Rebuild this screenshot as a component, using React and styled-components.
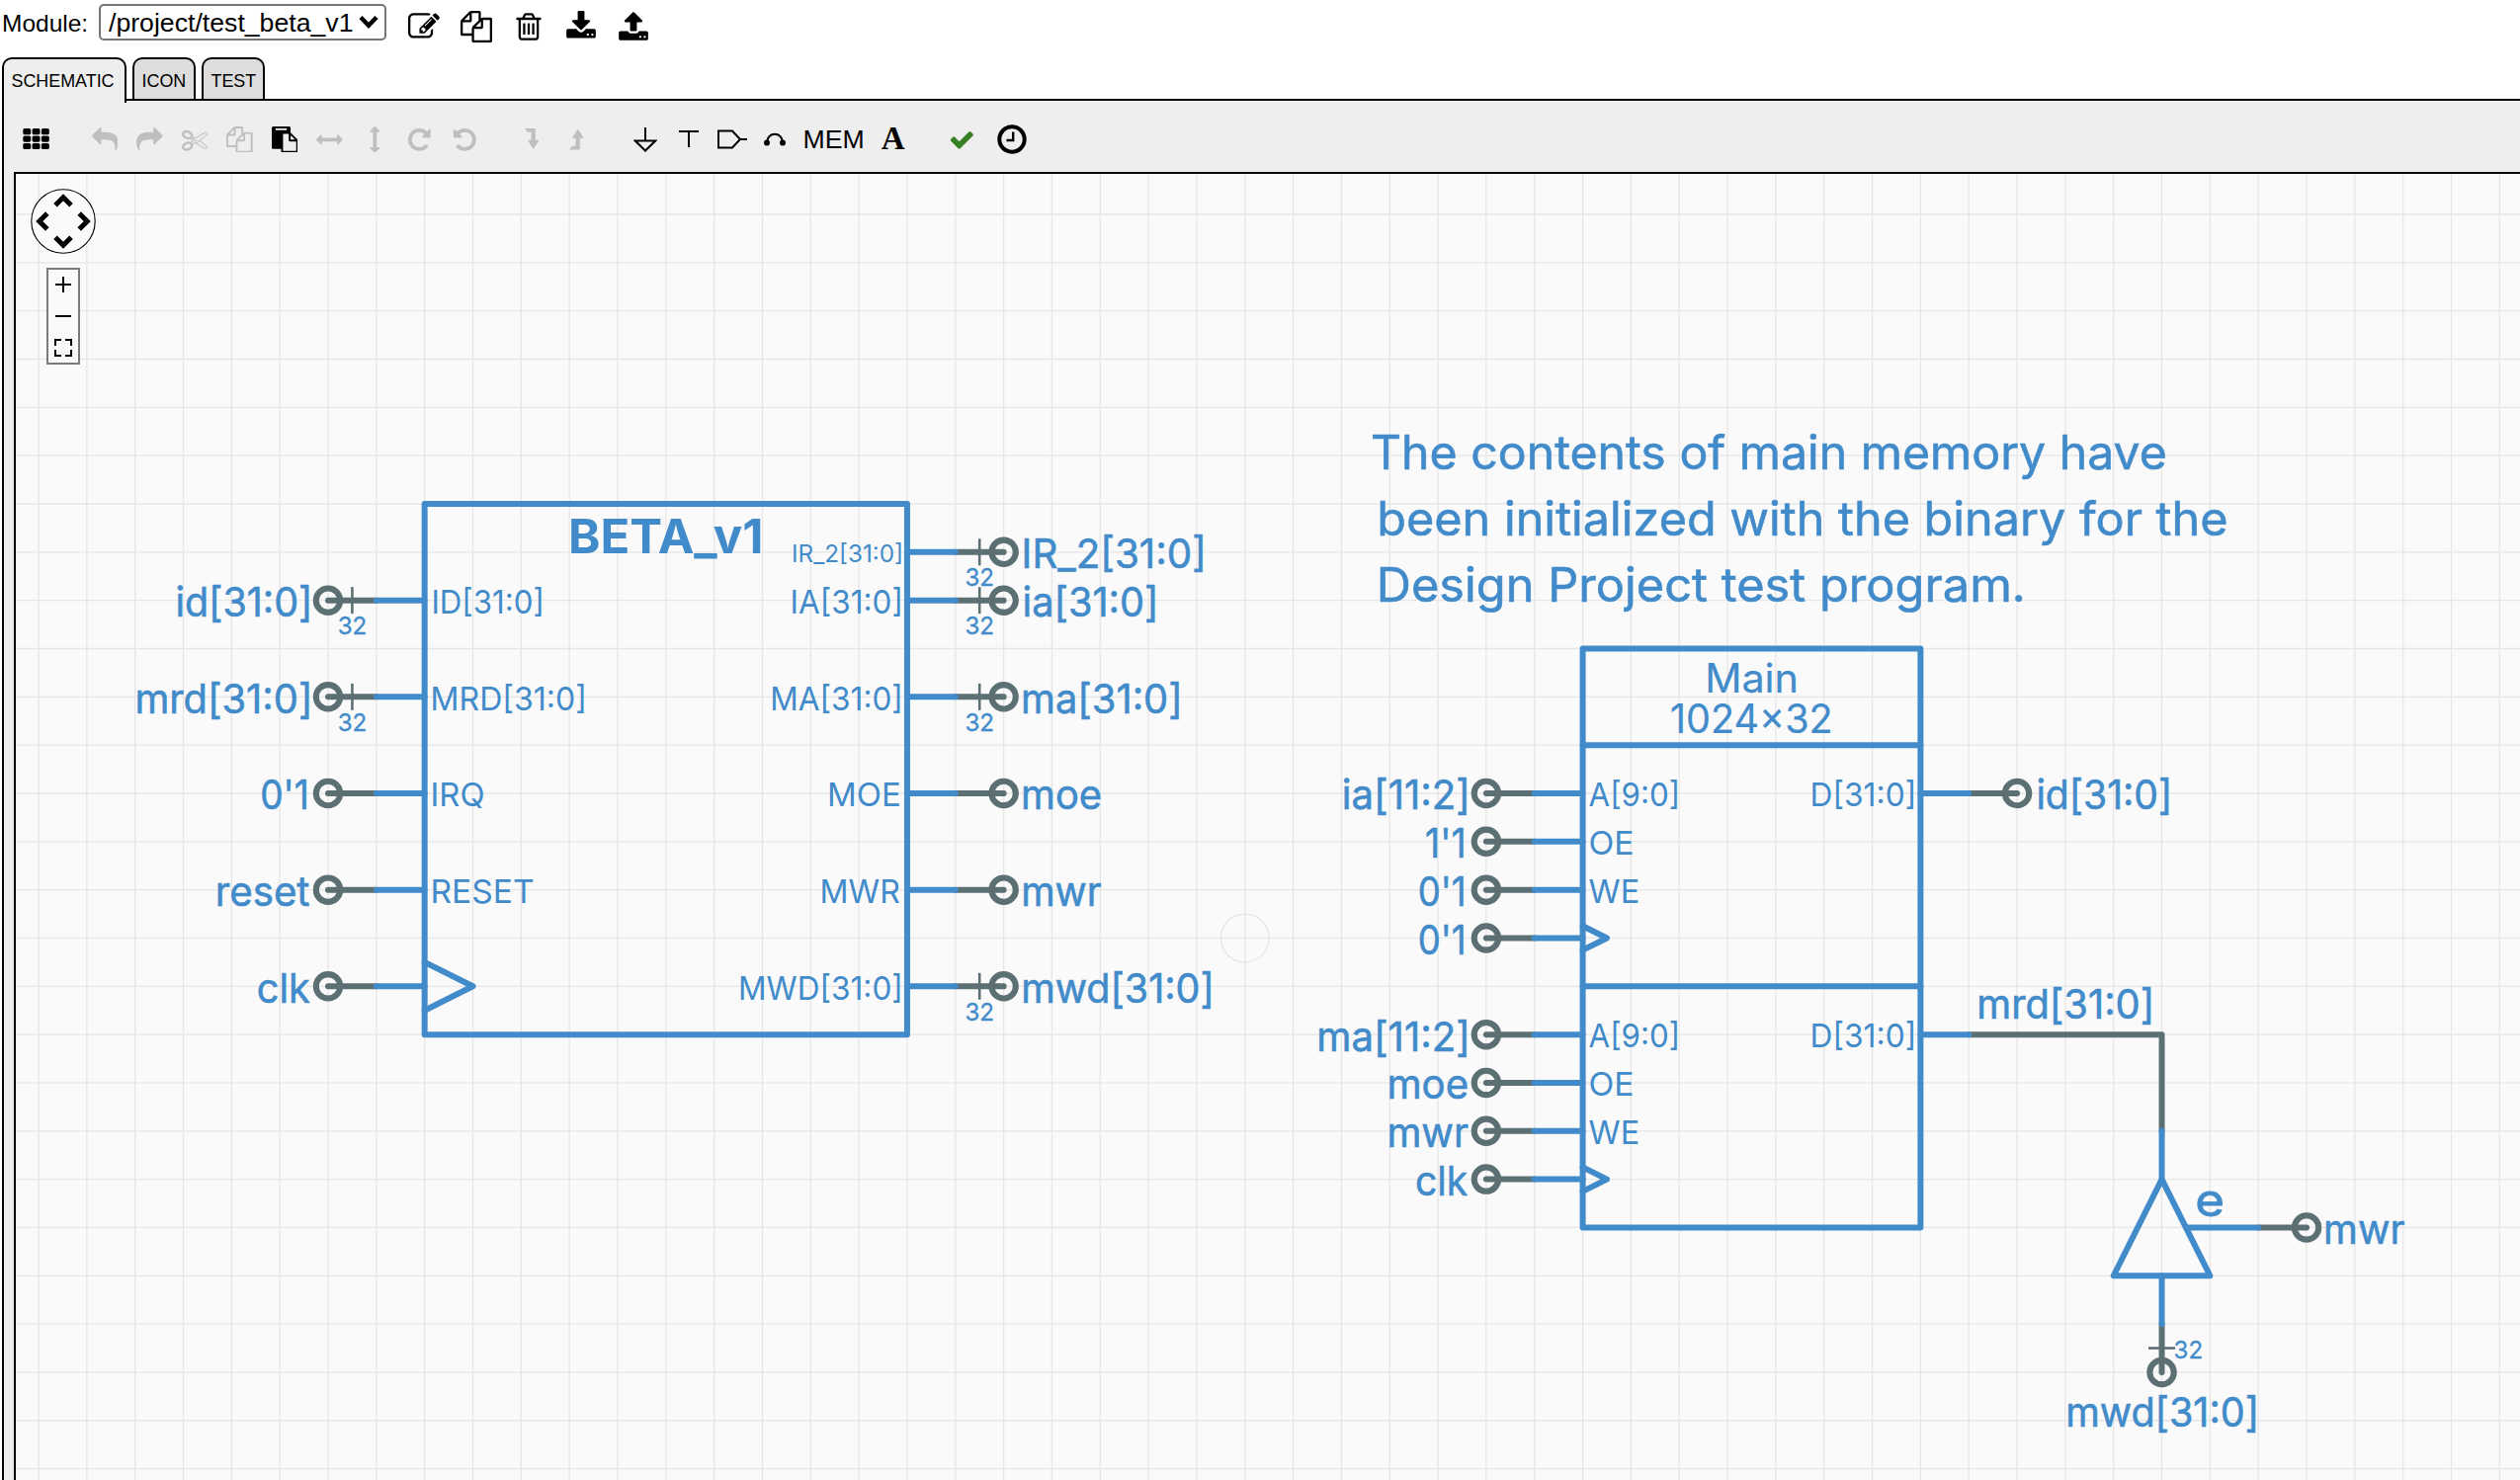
import React from "react";
import styled, { createGlobalStyle } from "styled-components";

const BLUE = "#428bca";
const WIRE = "#5c6f73";
const MUTED = "#bfbfbf";
const SCHEMATIC_FONT = "Inter";

const GlobalStyle = createGlobalStyle`
  * { box-sizing: border-box; }
  html, body { margin: 0; height: 100%; overflow: hidden; background: #fff; }
  body { font-family: "Liberation Sans", Arial, sans-serif; color: #000; }
`;

const Page = styled.div`
  display: flex;
  flex-direction: column;
  width: 2550px;
  height: 1498px;
`;

const ModuleBar = styled.header`
  display: flex;
  align-items: flex-start;
  height: 58px;
  flex: none;
`;

const ModuleLabel = styled.span`
  width: 100px;
  padding: 10px 0 0 2px;
  font-size: 24.5px;
  line-height: 28px;
  flex: none;
`;

const ModuleSelect = styled.div`
  display: flex;
  align-items: center;
  width: 291px;
  height: 37px;
  margin-top: 4px;
  padding: 1px 6px 0 8px;
  border: 2px solid #767676;
  border-radius: 5px;
  font-size: 26.67px;
  line-height: 30px;
  white-space: nowrap;
  svg { margin-left: auto; margin-bottom: 2px; }
`;

const ModuleActions = styled.div`
  display: flex;
  gap: 21px;
  padding: 11px 0 0 22px;
`;

const Tabs = styled.nav`
  display: flex;
  align-items: flex-start;
  height: 42px;
  padding-left: 2px;
  gap: 6px;
  flex: none;
`;

const Tab = styled.div`
  position: relative;
  z-index: ${(p) => (p.$active ? 1 : 0)};
  width: ${(p) => p.$width}px;
  height: ${(p) => (p.$active ? 46 : 42)}px;
  padding: 10px 0 0 7.5px;
  border: 2px solid #000;
  border-bottom: 0;
  border-radius: 10px 10px 0 0;
  background: ${(p) => (p.$active ? "#eee" : "#ddd")};
  font-size: 17.9px;
  line-height: 24px;
  flex: none;
`;

const Panel = styled.main`
  display: flex;
  flex-direction: column;
  flex: 1;
  min-height: 0;
  margin-left: 2px;
  border: 2px solid #000;
  border-right: 0;
  border-bottom: 0;
  background: #eee;
`;

const Toolbar = styled.div`
  display: flex;
  align-items: center;
  height: 72px;
  padding: 6px 0 0 19px;
  flex: none;
`;

const Tool = styled.div`
  display: flex;
  align-items: center;
  justify-content: center;
  width: ${(p) => p.$w || 45.7}px;
  height: 44px;
  color: ${(p) => p.$color || "#000"};
  flex: none;
`;

const MemTool = styled(Tool)`
  font-size: 26.67px;
  line-height: 30px;
`;

const TextTool = styled(Tool)`
  font-family: "Liberation Serif", "Times New Roman", serif;
  font-weight: bold;
  font-size: 33px;
  line-height: 36px;
  padding-bottom: 3px;
`;

const Canvas = styled.div`
  position: relative;
  flex: 1;
  min-height: 0;
  margin-left: 10px;
  border: 2px solid #000;
  border-right: 0;
  border-bottom: 0;
  background: #fafafa;
  overflow: hidden;
`;

const Drawing = styled.svg`
  display: block;
`;

const PanPad = styled.svg`
  position: absolute;
  left: 15px;
  top: 15px;
`;

const ZoomBox = styled.div`
  position: absolute;
  left: 31px;
  top: 95px;
  display: flex;
  flex-direction: column;
  align-items: center;
  width: 34px;
  height: 98px;
  border: 2px solid #7a7a7a;
  background: #fafafa;
`;

const ZoomButton = styled.svg`
  width: 30px;
  height: 32px;
  flex: none;
  fill: none;
  stroke: #000;
  stroke-width: 2;
`;

const SchematicText = styled.text`
  font-family: "${SCHEMATIC_FONT}", "Liberation Sans", sans-serif;
  font-weight: ${(p) => p.$weight || 400};
  font-size: ${(p) => p.$size}px;
  fill: ${BLUE};
  stroke: ${BLUE};
  stroke-width: ${(p) => p.$heft}px;
  white-space: pre;
`;

/* ---- icons ---- */

const paths = {
  edit: "M888 1184l116-116-152-152-116 116v56h96v96h56zm440-720q-16-16-33 1l-350 350q-17 17-1 33t33-1l350-350q17-17 1-33zm80 594v190q0 119-84.5 203.5t-203.5 84.5h-832q-119 0-203.5-84.5t-84.5-203.5v-832q0-119 84.5-203.5t203.5-84.5h832q63 0 117 25 15 7 18 23 3 17-9 29l-49 49q-14 14-32 8-23-6-45-6h-832q-66 0-113 47t-47 113v832q0 66 47 113t113 47h832q66 0 113-47t47-113v-126q0-13 9-22l64-64q15-15 35-7t20 29zm-96-738l288 288-672 672h-288v-288zm444 132l-92 92-288-288 92-92q28-28 68-28t68 28l152 152q28 28 28 68t-28 68z",
  copy: "M1696 384q40 0 68 28t28 68v1216q0 40-28 68t-68 28h-960q-40 0-68-28t-28-68v-288h-544q-40 0-68-28t-28-68v-672q0-40 20-88t48-76l408-408q28-28 76-48t88-20h416q40 0 68 28t28 68v328q68-40 128-40h416zm-544 213l-299 299h299v-299zm-640-384l-299 299h299v-299zm196 647l316-316v-416h-384v416q0 40-28 68t-68 28h-416v640h512v-256q0-40 20-88t48-76zm956 804v-1152h-384v416q0 40-28 68t-68 28h-416v640h896z",
  trash: "M704 736v576q0 14-9 23t-23 9h-64q-14 0-23-9t-9-23v-576q0-14 9-23t23-9h64q14 0 23 9t9 23zm256 0v576q0 14-9 23t-23 9h-64q-14 0-23-9t-9-23v-576q0-14 9-23t23-9h64q14 0 23 9t9 23zm256 0v576q0 14-9 23t-23 9h-64q-14 0-23-9t-9-23v-576q0-14 9-23t23-9h64q14 0 23 9t9 23zm128 724v-948h-896v948q0 22 7 40.5t14.5 27 10.5 8.5h832q3 0 10.5-8.5t14.5-27 7-40.5zm-672-1076h448l-48-117q-7-9-17-11h-317q-10 2-17 11zm928 32v64q0 14-9 23t-23 9h-96v948q0 83-47 143.5t-113 60.5h-832q-66 0-113-58.5t-47-141.5v-952h-96q-14 0-23-9t-9-23v-64q0-14 9-23t23-9h309l70-167q15-37 54-63t79-26h320q40 0 79 26t54 63l70 167h309q14 0 23 9t9 23z",
  download: "M1344 1344q0-26-19-45t-45-19-45 19-19 45 19 45 45 19 45-19 19-45zm256 0q0-26-19-45t-45-19-45 19-19 45 19 45 45 19 45-19 19-45zm128-224v320q0 40-28 68t-68 28h-1472q-40 0-68-28t-28-68v-320q0-40 28-68t68-28h465l135 136q58 56 136 56t136-56l136-136h464q40 0 68 28t28 68zm-325-569q17 41-14 70l-448 448q-18 19-45 19t-45-19l-448-448q-31-29-14-70 17-39 59-39h256v-448q0-26 19-45t45-19h256q26 0 45 19t19 45v448h256q42 0 59 39z",
  upload: "M1344 1472q0-26-19-45t-45-19-45 19-19 45 19 45 45 19 45-19 19-45zm256 0q0-26-19-45t-45-19-45 19-19 45 19 45 45 19 45-19 19-45zm128-224v320q0 40-28 68t-68 28h-1472q-40 0-68-28t-28-68v-320q0-40 28-68t68-28h427q21 56 70.5 92t110.5 36h256q61 0 110.5-36t70.5-92h427q40 0 68 28t28 68zm-325-648q-17 40-59 40h-256v448q0 26-19 45t-45 19h-256q-26 0-45-19t-19-45v-448h-256q-42 0-59-40-17-39 14-69l448-448q18-19 45-19t45 19l448 448q31 30 14 69z",
  reply: "M1792 1120q0 166-127 451-3 7-10.5 24t-13.5 30-13 22q-12 17-28 17-15 0-23.5-10t-8.5-25q0-9 2.5-26.5t2.5-23.5q5-68 5-123 0-101-17.5-181t-48.5-138.5-80-101-105.5-69.5-133-42.5-154-21.5-175.5-6h-224v256q0 26-19 45t-45 19-45-19l-512-512q-19-19-19-45t19-45l512-512q19-19 45-19t45 19 19 45v256h224q713 0 875 403 53 134 53 333z",
  cut: "M960 896q26 0 45 19t19 45-19 45-45 19-45-19-19-45 19-45 45-19zm300 64l507 398q28 20 25 56-5 35-35 51l-128 64q-13 7-29 7-17 0-31-8l-690-387-110 66q-8 4-12 5 14 49 10 97-7 77-56 147.5t-132 123.5q-132 84-277 84-136 0-222-78-90-84-79-207 7-76 56-147t131-124q132-84 278-84 83 0 151 31 9-13 22-22l122-73-122-73q-13-9-22-22-68 31-151 31-146 0-278-84-82-53-131-124t-56-147q-5-59 15.5-113t63.5-93q85-79 222-79 145 0 277 84 83 52 132 123t56 148q4 48-10 97 4 1 12 5l110 66 690-387q14-8 31-8 16 0 29 7l128 64q30 16 35 51 3 36-25 56zm-681-260q46-42 21-108t-106-117q-92-59-192-59-74 0-113 36-46 42-21 108t106 117q92 59 192 59 74 0 113-36zm-85 745q81-51 106-117t-21-108q-39-36-113-36-100 0-192 59-81 51-106 117t21 108q39 36 113 36 100 0 192-59zm178-613l96 58v-11q0-36 33-56l14-8-79-44-26 26q-3 3-10 11t-12 12q-2 2-4 3.5t-3 2.5zm224 224l96 32 736-576-128-64-768 431v113l-160 96 9 8q2 2 7 6 4 4 11 12t11 12l26 26zm704 416l128-64-520-408-177 138q-2 3-13 7z",
  paste: "M768 1664h896v-640h-416q-40 0-68-28t-28-68v-416h-384v1152zm256-1440v-64q0-13-9.5-22.5t-22.5-9.5h-704q-13 0-22.5 9.5t-9.5 22.5v64q0 13 9.5 22.5t22.5 9.5h704q13 0 22.5-9.5t9.5-22.5zm256 672h299l-299-299v299zm512 128v672q0 40-28 68t-68 28h-960q-40 0-68-28t-28-68v-160h-544q-40 0-68-28t-28-68v-1344q0-40 28-68t68-28h1088q40 0 68 28t28 68v328q21 13 36 28l408 408q28 28 48 76t20 88z",
  flipH: "M1792 896q0 26-19 45l-256 256q-19 19-45 19t-45-19-19-45v-128h-1024v128q0 26-19 45t-45 19-45-19l-256-256q-19-19-19-45t19-45l256-256q19-19 45-19t45 19 19 45v128h1024v-128q0-26 19-45t45-19 45 19l256 256q19 19 19 45z",
  flipV: "M1216 320q0 26-19 45t-45 19h-128v1024h128q26 0 45 19t19 45-19 45l-256 256q-19 19-45 19t-45-19l-256-256q-19-19-19-45t19-45 45-19h128v-1024h-128q-26 0-45-19t-19-45 19-45l256-256q19-19 45-19t45 19l256 256q19 19 19 45z",
  rotate: "M1664 256v448q0 26-19 45t-45 19h-448q-42 0-59-40-17-39 14-69l138-138q-148-137-349-137-104 0-198.5 40.5t-163.5 109.5-109.5 163.5-40.5 198.5 40.5 198.5 109.5 163.5 163.5 109.5 198.5 40.5q119 0 225-52t179-147q7-10 23-12 15 0 25 9l137 138q9 8 9.5 20.5t-7.5 22.5q-109 132-264 204.5t-327 72.5q-156 0-298-61t-245-164-164-245-61-298 61-298 164-245 245-164 298-61q147 0 284.5 55.5t244.5 156.5l130-129q29-31 70-14 39 17 39 59z",
  check: "M1671 566q0 40-28 68l-724 724-136 136q-28 28-68 28t-68-28l-136-136-362-362q-28-28-28-68t28-68l136-136q28-28 68-28t68 28l294 295 656-657q28-28 68-28t68 28l136 136q28 28 28 68z",
};

const Icon = ({ name, size = 26.67, mirror }) => (
  <svg width={size} height={size} viewBox="0 0 1792 1792" fill="currentColor">
    <path d={paths[name]} transform={mirror ? "translate(1792 0) scale(-1 1)" : undefined} />
  </svg>
);

const GridIcon = () => (
  <svg width="27" height="22" fill="currentColor">
    {[0, 1, 2].map((r) =>
      [0, 1, 2].map((c) => (
        <rect key={`${r}${c}`} x={0.3 + c * 9.3} y={0.1 + r * 7.4} width="7.9" height="6.2" rx="1.6" />
      ))
    )}
  </svg>
);

const LevelIcon = ({ up }) => (
  <svg width="15" height="22" viewBox="0 0 15 22" fill="currentColor">
    <path
      d="M.4 .6Q0 0 .8 0H9.8Q10.8 0 10.8 1V11.8H13.6Q14.6 11.8 14 12.8L9.4 20Q8.7 20.9 8 20L3.4 12.8Q2.8 11.8 3.8 11.8H6.5V3.7H3.3Q2.9 3.7 2.6 3.3Z"
      transform={up ? "translate(0 21.5) scale(1 -1)" : undefined}
    />
  </svg>
);

const LineIcon = ({ w, h, children }) => (
  <svg width={w} height={h} viewBox={`0 0 ${w} ${h}`} fill="none" stroke="currentColor" strokeWidth="2">
    {children}
  </svg>
);

/* ---- schematic ---- */

const PITCH = 48.83;
const gx = (n) => 332 + n * PITCH;
const gy = (n) => 510 + n * PITCH;
const range = (a, b) => Array.from({ length: b - a + 1 }, (_, i) => a + i);

const pen = document.createElement("canvas").getContext("2d");

// Fits a string's drawn outline between two x positions.
function Label({ children, left, right, y, size, weight = 400, heft = 0 }) {
  pen.font = `${weight} ${size}px ${SCHEMATIC_FONT}`;
  const m = pen.measureText(children);
  const k = (right - left) / (m.actualBoundingBoxLeft + m.actualBoundingBoxRight);
  return (
    <SchematicText
      $size={size}
      $weight={weight}
      $heft={heft}
      x={left + m.actualBoundingBoxLeft * k}
      y={y}
      textLength={m.width * k}
      lengthAdjust="spacingAndGlyphs"
    >
      {children}
    </SchematicText>
  );
}

const Seg = ({ x1, y1, x2, y2, color = BLUE, width = 6 }) => (
  <line x1={gx(x1)} y1={gy(y1)} x2={gx(x2)} y2={gy(y2)} stroke={color} strokeWidth={width} strokeLinecap="round" />
);

const Terminal = ({ x, y }) => (
  <circle cx={gx(x)} cy={gy(y)} r="12.2" fill="none" stroke={WIRE} strokeWidth="6.1" />
);

const PORT = 41.4;
const PIN = 33;
const SMALL = 24.8;

// dir: +1 when the pin leaves to the right of the part, -1 to the left
const Lead = ({ edge, row, dir, bus }) => {
  const end = edge + 2 * dir;
  const tick = gx(end - 0.5 * dir);
  return (
    <g>
      <Seg x1={end} y1={row} x2={edge + dir} y2={row} color={WIRE} />
      <Terminal x={end} y={row} />
      <Seg x1={edge} y1={row} x2={edge + dir} y2={row} />
      {bus && (
        <>
          <line x1={tick} x2={tick} y1={gy(row) - 13.5} y2={gy(row) + 13.5} stroke={WIRE} strokeWidth="2.6" />
          <Label left={tick - 13.8} right={tick + 13.8} y={gy(row) + 34.6} size={SMALL} heft={0.3}>32</Label>
        </>
      )}
    </g>
  );
};

const leads = [
  { edge: 2, dir: -1, row: 2, bus: true, pin: ["ID[31:0]", 438.3, 548], net: ["id[31:0]", 179.3, 312.5] },
  { edge: 2, dir: -1, row: 4, bus: true, pin: ["MRD[31:0]", 437.5, 591], net: ["mrd[31:0]", 139.3, 312.5] },
  { edge: 2, dir: -1, row: 6, pin: ["IRQ", 437.5, 489.3], net: ["0'1", 265, 310.3] },
  { edge: 2, dir: -1, row: 8, pin: ["RESET", 437.5, 539.3], net: ["reset", 220.7, 313] },
  { edge: 2, dir: -1, row: 10, net: ["clk", 261.7, 314] },
  { edge: 12, dir: 1, row: 1, bus: true, net: ["IR_2[31:0]", 1036.5, 1217] },
  { edge: 12, dir: 1, row: 2, bus: true, pin: ["IA[31:0]", 801.5, 911], net: ["ia[31:0]", 1036.5, 1168.5] },
  { edge: 12, dir: 1, row: 4, bus: true, pin: ["MA[31:0]", 781.2, 911], net: ["ma[31:0]", 1036, 1192.8] },
  { edge: 12, dir: 1, row: 6, pin: ["MOE", 839, 910], net: ["moe", 1036, 1114] },
  { edge: 12, dir: 1, row: 8, pin: ["MWR", 831.5, 910.6], net: ["mwr", 1036, 1114] },
  { edge: 12, dir: 1, row: 10, bus: true, pin: ["MWD[31:0]", 749, 911], net: ["mwd[31:0]", 1036, 1225] },
  { edge: 26, dir: -1, row: 6, pin: ["A[9:0]", 1607.6, 1697.3], net: ["ia[11:2]", 1359.7, 1484] },
  { edge: 26, dir: -1, row: 7, pin: ["OE", 1608.5, 1651.7], net: ["1'1", 1443, 1481] },
  { edge: 26, dir: -1, row: 8, pin: ["WE", 1607.6, 1657.5], net: ["0'1", 1436.5, 1481] },
  { edge: 26, dir: -1, row: 9, net: ["0'1", 1436.5, 1481] },
  { edge: 33, dir: 1, row: 6, pin: ["D[31:0]", 1833.5, 1936.3], net: ["id[31:0]", 2062.3, 2194.3] },
  { edge: 26, dir: -1, row: 11, pin: ["A[9:0]", 1607.6, 1697.3], net: ["ma[11:2]", 1335.2, 1484] },
  { edge: 26, dir: -1, row: 12, pin: ["OE", 1608.5, 1651.7], net: ["moe", 1406.3, 1485] },
  { edge: 26, dir: -1, row: 13, pin: ["WE", 1607.6, 1657.5], net: ["mwr", 1406.3, 1485.4] },
  { edge: 26, dir: -1, row: 14, net: ["clk", 1433.8, 1485.4] },
];

const Schematic = () => (
  <Drawing width="2534" height="1322" viewBox="16 176 2534 1322">
    <g stroke="#e6e6e6" strokeWidth="1.3">
      {range(-6, 45).map((n) => <line key={n} x1={gx(n)} x2={gx(n)} y1="176" y2="1498" />)}
      {range(-6, 20).map((n) => <line key={n} y1={gy(n)} y2={gy(n)} x1="16" x2="2550" />)}
    </g>
    <circle cx={gx(19)} cy={gy(9)} r="24.4" fill="none" stroke="#e4e4e4" strokeWidth="1.2" />

    {leads.map((l, i) => (
      <g key={i}>
        <Lead {...l} />
        {l.pin && <Label left={l.pin[1]} right={l.pin[2]} y={gy(l.row) + 13.2} size={PIN}>{l.pin[0]}</Label>}
        <Label left={l.net[1]} right={l.net[2]} y={gy(l.row) + 16.5} size={PORT} heft={0.6}>{l.net[0]}</Label>
      </g>
    ))}

    <g fill="none" stroke={BLUE} strokeWidth="6" strokeLinejoin="round" strokeLinecap="round">
      <rect x={gx(2)} y={gy(0)} width={10 * PITCH} height={11 * PITCH} />
      <path d={`M${gx(2)} ${gy(9.5)}L${gx(3)} ${gy(10)}L${gx(2)} ${gy(10.5)}`} />
      <rect x={gx(26)} y={gy(3)} width={7 * PITCH} height={12 * PITCH} />
      <path d={`M${gx(26)} ${gy(5)}H${gx(33)}M${gx(26)} ${gy(10)}H${gx(33)}`} />
      <path d={`M${gx(26)} ${gy(8.75)}L${gx(26.5)} ${gy(9)}L${gx(26)} ${gy(9.25)}`} />
      <path d={`M${gx(26)} ${gy(13.75)}L${gx(26.5)} ${gy(14)}L${gx(26)} ${gy(14.25)}`} />
    </g>

    <Label left={578} right={769.5} y={560} size={48.5} weight={700}>BETA_v1</Label>
    <Label left={803} right={912} y={569} size={SMALL}>IR_2[31:0]</Label>

    <Label left={1389} right={2190.8} y={475.3} size={48.1} heft={0.6}>The contents of main memory have</Label>
    <Label left={1396.3} right={2252.4} y={542.3} size={48.1} heft={0.6}>been initialized with the binary for the</Label>
    <Label left={1396.8} right={2047} y={609.3} size={48.1} heft={0.6}>Design Project test program.</Label>
    <Label left={1728.2} right={1817} y={700.9} size={40.6} heft={0.2}>Main</Label>
    <Label left={1691} right={1852} y={741.9} size={40.6} heft={0.2}>1024×32</Label>

    <path
      d={`M${gx(34)} ${gy(11)}H${gx(38)}V${gy(13)}`}
      fill="none" stroke={WIRE} strokeWidth="6" strokeLinejoin="round" strokeLinecap="round"
    />
    <Seg x1={33} y1={11} x2={34} y2={11} />
    <Label left={1833.5} right={1936.3} y={gy(11) + 13.2} size={PIN}>D[31:0]</Label>
    <Label left={2003.2} right={2176.3} y={1030.8} size={PORT} heft={0.6}>mrd[31:0]</Label>

    <Seg x1={38} y1={13} x2={38} y2={14} />
    <path
      d={`M${gx(38)} ${gy(14)}L${gx(37)} ${gy(16)}H${gx(39)}Z`}
      fill="none" stroke={BLUE} strokeWidth="6" strokeLinejoin="round"
    />
    <Seg x1={40} y1={15} x2={41} y2={15} color={WIRE} />
    <Terminal x={41} y={15} />
    <Seg x1={38.5} y1={15} x2={40} y2={15} />
    <Label left={2223.5} right={2249} y={1231.3} size={46} heft={0.8}>e</Label>
    <Label left={2354} right={2432.8} y={1259.4} size={PORT} heft={0.6}>mwr</Label>

    <Seg x1={38} y1={17} x2={38} y2={18} color={WIRE} />
    <Terminal x={38} y={18} />
    <Seg x1={38} y1={16} x2={38} y2={17} />
    <line x1={gx(38) - 13.5} x2={gx(38) + 13.5} y1={gy(17.5)} y2={gy(17.5)} stroke={WIRE} strokeWidth="2.6" />
    <Label left={2200.5} right={2228} y={1375} size={SMALL} heft={0.3}>32</Label>
    <Label left={2093.1} right={2282.2} y={1444} size={PORT} heft={0.6}>mwd[31:0]</Label>
  </Drawing>
);

export default function App() {
  return (
    <Page>
      <GlobalStyle />
      <ModuleBar>
        <ModuleLabel>Module:</ModuleLabel>
        <ModuleSelect>
          <span>/project/test_beta_v1</span>
          <svg width="20" height="14" viewBox="0 0 20 14" fill="none" stroke="#000" strokeWidth="4.4">
            <path d="M2 2.5L10 10.8L18 2.5" />
          </svg>
        </ModuleSelect>
        <ModuleActions>
          {["edit", "copy", "trash", "download", "upload"].map((n) => <Icon key={n} name={n} size={32} />)}
        </ModuleActions>
      </ModuleBar>
      <Tabs>
        <Tab $active $width={126}>SCHEMATIC</Tab>
        <Tab $width={64}>ICON</Tab>
        <Tab $width={64}>TEST</Tab>
      </Tabs>
      <Panel>
        <Toolbar>
          <Tool $w={27}><GridIcon /></Tool>
          <Tool $w={33} />
          <Tool $w={45.7} $color={MUTED}><Icon name="reply" /></Tool>
          <Tool $w={45.5} $color={MUTED}><Icon name="reply" mirror /></Tool>
          <Tool $w={45.5} $color={MUTED}><Icon name="cut" /></Tool>
          <Tool $w={45.5} $color={MUTED}><Icon name="copy" /></Tool>
          <Tool $w={45.5}><Icon name="paste" /></Tool>
          <Tool $w={45.5} $color={MUTED}><Icon name="flipH" /></Tool>
          <Tool $w={45.5} $color={MUTED}><Icon name="flipV" /></Tool>
          <Tool $w={45.5} $color={MUTED}><Icon name="rotate" /></Tool>
          <Tool $w={45.5} $color={MUTED}><Icon name="rotate" mirror /></Tool>
          <Tool $w={23} />
          <Tool $w={45.5} $color={MUTED}><LevelIcon /></Tool>
          <Tool $w={45.5} $color={MUTED}><LevelIcon up /></Tool>
          <Tool $w={24} />
          <Tool $w={45}>
            <LineIcon w={24} h={26}><path d="M12 1V14.5M1.8 14.5H22.2L12 24.5Z" /></LineIcon>
          </Tool>
          <Tool $w={43}>
            <LineIcon w={20} h={18}><path d="M0 1H20M10 1V17" /></LineIcon>
          </Tool>
          <Tool $w={45}>
            <LineIcon w={30} h={20}><path d="M1 1.5H15L23 10L15 18.5H1ZM23 10H30" /></LineIcon>
          </Tool>
          <Tool $w={41}>
            <LineIcon w={22} h={14}>
              <path d="M3 10.5C3 -1.2 19 -1.2 19 10.5" />
              <circle cx="3" cy="10.5" r="2" fill="currentColor" />
              <circle cx="19" cy="10.5" r="2" fill="currentColor" />
            </LineIcon>
          </Tool>
          <MemTool $w={78}>MEM</MemTool>
          <TextTool $w={42}>A</TextTool>
          <Tool $w={26} />
          <Tool $w={45} $color="#378025"><Icon name="check" /></Tool>
          <Tool $w={56}>
            <svg width="30" height="30" viewBox="0 0 30 30" fill="none" stroke="currentColor">
              <circle cx="15" cy="15" r="12.7" strokeWidth="4" />
              <path d="M16.2 7.5V16H9.5" strokeWidth="2.4" />
            </svg>
          </Tool>
        </Toolbar>
        <Canvas>
          <Schematic />
          <PanPad width="66" height="66" viewBox="-33 -33 66 66" fill="none" stroke="#000">
            <circle r="32.2" fill="#fafafa" strokeWidth="1.1" />
            {[0, 90, 180, 270].map((a) => (
              <path key={a} d="M-8 -16.2L0 -24.2L8 -16.2" strokeWidth="5" transform={`rotate(${a})`} />
            ))}
          </PanPad>
          <ZoomBox>
            <ZoomButton viewBox="-15 -15 30 32"><path d="M-8 0H8M0 -8V8" /></ZoomButton>
            <ZoomButton viewBox="-15 -15 30 32"><path d="M-8 0H8" /></ZoomButton>
            <ZoomButton viewBox="-15 -15 30 32">
              <path d="M-8 -2V-8H-2M2 -8H8V-2M8 2V8H2M-2 8H-8V2" />
            </ZoomButton>
          </ZoomBox>
        </Canvas>
      </Panel>
    </Page>
  );
}
